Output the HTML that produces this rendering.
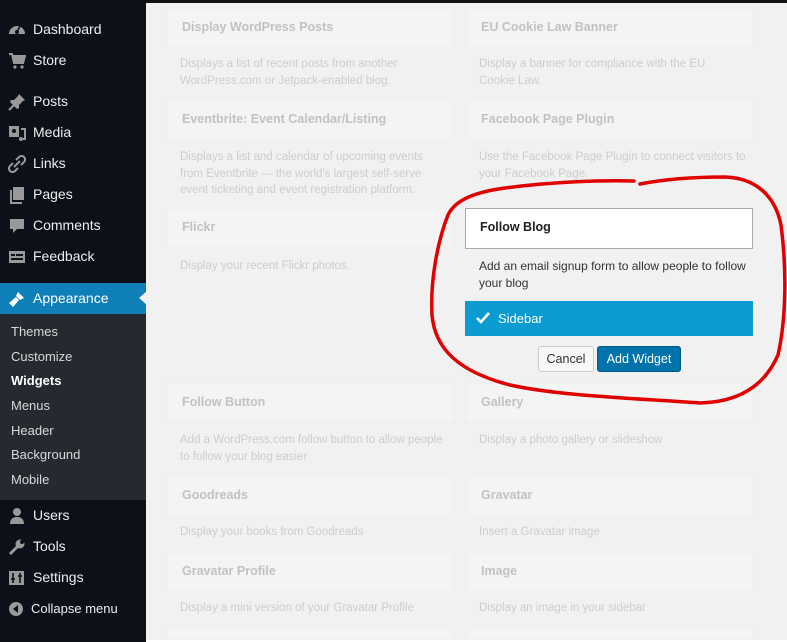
<!DOCTYPE html>
<html><head><style>
*{margin:0;padding:0;box-sizing:border-box}
body{width:787px;height:642px;overflow:hidden;background:#f1f1f1;font-family:"Liberation Sans",sans-serif;position:relative}
#sb{position:absolute;left:0;top:0;width:146px;height:642px;background:#0b1019}
.mi{position:absolute;left:0;width:146px;color:#eee;font-size:14px;line-height:20px}
.mi .t{position:absolute;left:33px;top:0}
.mi svg{position:absolute;left:8px;top:2px}
#app{position:absolute;left:0;top:283px;width:146px;height:31px;background:#0f7fb8}
#sub{position:absolute;left:0;top:314px;width:146px;height:186px;background:#252a31}
.si{position:absolute;left:11px;color:#d8d8d8;font-size:13px}
#main{position:absolute;left:146px;top:0;width:641px;height:642px;background:#f1f1f1}
#topbar{position:absolute;left:146px;top:0;width:641px;height:3px;background:#111}
.card{position:absolute;width:287px;height:39px;background:#f4f4f4;border:1px solid #efefef}
.card b{position:absolute;left:14px;top:11px;font-size:12.5px;color:#c2c2c2}
.d{position:absolute;font-size:11.5px;line-height:16.5px;color:#cdcdcd;width:268px}
</style></head><body>
<div id="sb">
 <div class="mi" style="top:19px"><svg width="18" height="16" viewBox="0 0 18 16"><path d="M1 13a8 8 0 1 1 16 0z" fill="#999"/><circle cx="9" cy="11" r="2" fill="#0b1019"/><path d="M9 11l3-6" stroke="#0b1019" stroke-width="1.5"/></svg><span class="t">Dashboard</span></div>
 <div class="mi" style="top:50px"><svg width="18" height="18" viewBox="0 0 18 18"><path d="M1 2h3l2 9h9l2-7H5" stroke="#999" stroke-width="2" fill="none"/><rect x="5" y="5" width="11" height="5" fill="#999"/><circle cx="7" cy="15" r="1.6" fill="#999"/><circle cx="14" cy="15" r="1.6" fill="#999"/></svg><span class="t">Store</span></div>
 <div class="mi" style="top:91px"><svg width="18" height="18" viewBox="0 0 18 18"><path d="M11 1l6 6-2 1-4 4 0 3-2 1-7-7 1-2 3 0 4-4z" fill="#999"/><path d="M6 12l-5 5" stroke="#999" stroke-width="2"/></svg><span class="t">Posts</span></div>
 <div class="mi" style="top:122px"><svg width="18" height="18" viewBox="0 0 18 18"><rect x="1" y="2" width="10" height="11" fill="#999"/><circle cx="6" cy="7" r="2" fill="#0b1019"/><path d="M13 5h4v10h-3" stroke="#999" stroke-width="2" fill="none"/><circle cx="13" cy="15" r="2" fill="#999"/></svg><span class="t">Media</span></div>
 <div class="mi" style="top:153px"><svg width="18" height="18" viewBox="0 0 18 18"><path d="M8 5l3-3a3 3 0 0 1 5 5l-3 3M10 13l-3 3a3 3 0 0 1-5-5l3-3M6 12l6-6" stroke="#999" stroke-width="2" fill="none"/></svg><span class="t">Links</span></div>
 <div class="mi" style="top:184px"><svg width="18" height="18" viewBox="0 0 18 18"><rect x="5" y="1" width="11" height="13" fill="#999"/><path d="M3 4v13h11" stroke="#999" stroke-width="2" fill="none"/></svg><span class="t">Pages</span></div>
 <div class="mi" style="top:215px"><svg width="18" height="18" viewBox="0 0 18 18"><path d="M2 2h14v10H9l-4 4v-4H2z" fill="#999"/></svg><span class="t">Comments</span></div>
 <div class="mi" style="top:246px"><svg width="18" height="18" viewBox="0 0 18 18"><rect x="1" y="3" width="16" height="12" fill="#999"/><rect x="3" y="6" width="4" height="2" fill="#0b1019"/><rect x="8" y="6" width="7" height="2" fill="#0b1019"/><rect x="3" y="10" width="12" height="2" fill="#0b1019"/></svg><span class="t">Feedback</span></div>
</div>
<div id="app"></div>
<div class="mi" style="top:288px;color:#fff"><svg width="18" height="18" viewBox="0 0 18 18"><path d="M10 2l6 6-4 2-4-4z" fill="#fff"/><path d="M8 7l3 3-6 7-4-4z" fill="#fff"/></svg><span class="t">Appearance</span></div>
<div style="position:absolute;left:139px;top:291px;width:0;height:0;border-top:7px solid transparent;border-bottom:7px solid transparent;border-right:8px solid #f1f1f1"></div>
<div id="sub"></div>
<div class="si" style="top:324px">Themes</div>
<div class="si" style="top:349px">Customize</div>
<div class="si" style="top:373px;color:#fff;font-weight:bold">Widgets</div>
<div class="si" style="top:398px">Menus</div>
<div class="si" style="top:423px">Header</div>
<div class="si" style="top:447px">Background</div>
<div class="si" style="top:472px">Mobile</div>
<div class="mi" style="top:505px"><svg width="18" height="18" viewBox="0 0 18 18"><circle cx="9" cy="5" r="4" fill="#999"/><path d="M2 17c0-5 3-7 7-7s7 2 7 7z" fill="#999"/></svg><span class="t">Users</span></div>
<div class="mi" style="top:536px"><svg width="18" height="18" viewBox="0 0 18 18"><path d="M2 16l8-8" stroke="#999" stroke-width="3"/><circle cx="12" cy="6" r="4.5" fill="#999"/><circle cx="14" cy="4" r="2" fill="#0b1019"/></svg><span class="t">Tools</span></div>
<div class="mi" style="top:567px"><svg width="18" height="18" viewBox="0 0 18 18"><rect x="1" y="2" width="15" height="14" fill="#999"/><path d="M5 4v10M12 4v10M3 10h4M10 7h4" stroke="#0b1019" stroke-width="1.6"/></svg><span class="t">Settings</span></div>
<div class="mi" style="top:599px;font-size:13px"><svg width="16" height="16" viewBox="0 0 16 16" style="left:8px"><circle cx="8" cy="8" r="7" fill="#999"/><path d="M10 4v8L5 8z" fill="#0b1019"/></svg><span class="t" style="left:31px">Collapse menu</span></div>

<div id="main"></div>
<div id="topbar"></div>

<div class="card" style="left:167px;top:8px"><b>Display WordPress Posts</b></div>
<div class="card" style="left:466px;top:8px"><b>EU Cookie Law Banner</b></div>
<div class="d" style="left:180px;top:56px">Displays a list of recent posts from another WordPress.com or Jetpack-enabled blog.</div>
<div class="d" style="left:479px;top:56px;width:240px">Display a banner for compliance with the EU Cookie Law.</div>

<div class="card" style="left:167px;top:100px"><b>Eventbrite: Event Calendar/Listing</b></div>
<div class="card" style="left:466px;top:100px"><b>Facebook Page Plugin</b></div>
<div class="d" style="left:180px;top:149px;width:250px">Displays a list and calendar of upcoming events from Eventbrite — the world's largest self-serve event ticketing and event registration platform.</div>
<div class="d" style="left:479px;top:149px">Use the Facebook Page Plugin to connect visitors to your Facebook Page.</div>

<div class="card" style="left:167px;top:208px"><b>Flickr</b></div>
<div class="d" style="left:180px;top:258px">Display your recent Flickr photos.</div>

<div style="position:absolute;left:465px;top:208px;width:288px;height:41px;background:#fff;border:1px solid #a9a9a9"></div>
<div style="position:absolute;left:480px;top:220px;font-size:12.5px;font-weight:bold;color:#222">Follow Blog</div>
<div style="position:absolute;left:479px;top:258px;width:280px;font-size:12px;line-height:16.5px;color:#333">Add an email signup form to allow people to follow your blog</div>
<div style="position:absolute;left:465px;top:301px;width:288px;height:35px;background:#0b9bd1;color:#fff;font-size:13px;line-height:35px;padding-left:33px">Sidebar</div>
<svg style="position:absolute;left:476px;top:311px" width="14" height="14" viewBox="0 0 14 14"><path d="M1 7l4 4 8-9" stroke="#fff" stroke-width="2.6" fill="none"/></svg>
<div style="position:absolute;left:538px;top:346px;width:56px;height:26px;background:#f8f8f8;border:1px solid #ccc;border-radius:3px;font-size:12.5px;color:#333;text-align:center;line-height:24px">Cancel</div>
<div style="position:absolute;left:597px;top:346px;width:84px;height:26px;background:#0073aa;border:1px solid #005a87;border-radius:3px;font-size:12.5px;color:#fff;text-align:center;line-height:24px">Add Widget</div>

<div class="card" style="left:167px;top:383px"><b>Follow Button</b></div>
<div class="card" style="left:466px;top:383px"><b>Gallery</b></div>
<div class="d" style="left:180px;top:432px">Add a WordPress.com follow button to allow people to follow your blog easier</div>
<div class="d" style="left:479px;top:432px">Display a photo gallery or slideshow</div>

<div class="card" style="left:167px;top:476px"><b>Goodreads</b></div>
<div class="card" style="left:466px;top:476px"><b>Gravatar</b></div>
<div class="d" style="left:180px;top:524px">Display your books from Goodreads</div>
<div class="d" style="left:479px;top:524px">Insert a Gravatar image</div>

<div class="card" style="left:167px;top:552px"><b>Gravatar Profile</b></div>
<div class="card" style="left:466px;top:552px"><b>Image</b></div>
<div class="d" style="left:180px;top:600px">Display a mini version of your Gravatar Profile</div>
<div class="d" style="left:479px;top:600px">Display an image in your sidebar</div>
<div class="card" style="left:167px;top:628px;height:12px"></div>
<div class="card" style="left:466px;top:628px;height:12px"></div>
<div style="position:absolute;left:146px;top:640px;width:641px;height:2px;background:#fff"></div>

<svg style="position:absolute;left:0;top:0" width="787" height="642"><path d="M634 181C600 180 550 182 505 188C475 192 455 200 448 215C438 240 430 280 432 315C435 350 460 372 510 385C560 396 630 398 700 403C740 402 765 385 778 355C786 320 787 270 781 225C775 195 755 178 725 177C695 177 665 179 640 184" stroke="#e00000" stroke-width="3.5" fill="none" stroke-linecap="round"/></svg>
</body></html>
